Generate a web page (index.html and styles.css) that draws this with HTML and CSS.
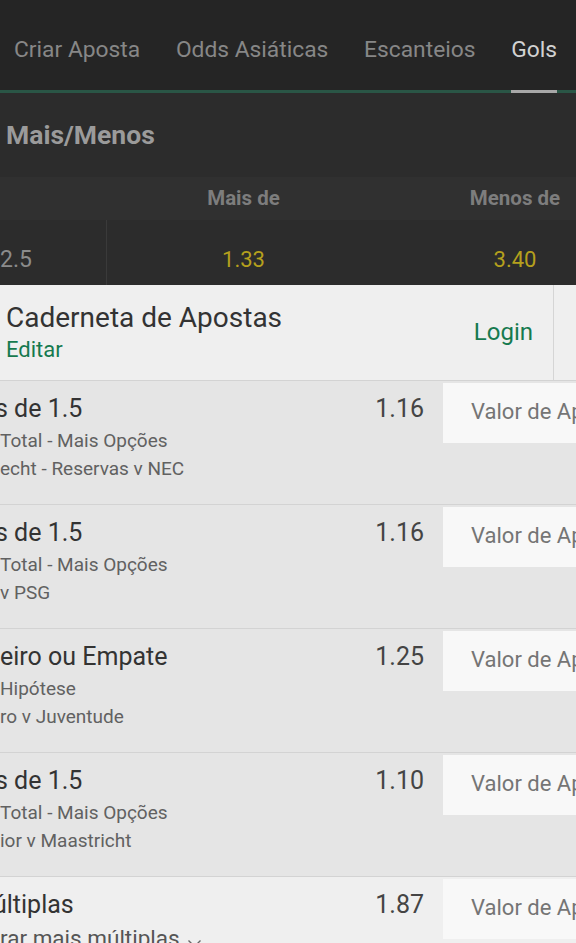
FILE: index.html
```html
<!DOCTYPE html>
<html lang="pt">
<head>
<meta charset="utf-8">
<title>Gols</title>
<link rel="stylesheet" href="styles.css">
</head>
<body>
<div class="page">
  <nav class="tabs">
    <span class="tab">Criar Aposta</span>
    <span class="tab">Odds Asiáticas</span>
    <span class="tab">Escanteios</span>
    <span class="tab active">Gols</span>
  </nav>

  <section class="market">
    <h2 class="market-title">Mais/Menos</h2>
    <div class="grid head">
      <div class="cell"></div>
      <div class="cell">Mais de</div>
      <div class="cell">Menos de</div>
    </div>
    <div class="grid data">
      <div class="cell label">2.5</div>
      <div class="cell odd">1.33</div>
      <div class="cell odd">3.40</div>
    </div>
  </section>

  <section class="slip">
    <header class="slip-head">
      <div class="slip-titles">
        <div class="slip-title">Caderneta de Apostas</div>
        <div class="slip-edit">Editar</div>
      </div>
      <div class="slip-login">Login</div>
      <div class="slip-side"></div>
    </header>

    <div class="bet">
      <div class="bet-info">
        <div class="bet-title cut">s de 1.5</div>
        <div class="bet-sub">Total - Mais Opções</div>
        <div class="bet-sub">echt - Reservas v NEC</div>
      </div>
      <div class="bet-odd">1.16</div>
      <div class="stake">Valor de Aposta</div>
    </div>

    <div class="bet">
      <div class="bet-info">
        <div class="bet-title cut">s de 1.5</div>
        <div class="bet-sub">Total - Mais Opções</div>
        <div class="bet-sub">v PSG</div>
      </div>
      <div class="bet-odd">1.16</div>
      <div class="stake">Valor de Aposta</div>
    </div>

    <div class="bet">
      <div class="bet-info">
        <div class="bet-title">eiro ou Empate</div>
        <div class="bet-sub">Hipótese</div>
        <div class="bet-sub">ro v Juventude</div>
      </div>
      <div class="bet-odd">1.25</div>
      <div class="stake">Valor de Aposta</div>
    </div>

    <div class="bet">
      <div class="bet-info">
        <div class="bet-title cut">s de 1.5</div>
        <div class="bet-sub">Total - Mais Opções</div>
        <div class="bet-sub">ior v Maastricht</div>
      </div>
      <div class="bet-odd">1.10</div>
      <div class="stake">Valor de Aposta</div>
    </div>

    <div class="bet multi">
      <div class="bet-info">
        <div class="bet-title cut-u">últiplas</div>
        <div class="bet-more">rar mais múltiplas<svg class="chev" viewBox="0 0 14 9" width="15" height="9"><path d="M1 1.5 L7 7.5 L13 1.5" fill="none" stroke="#666" stroke-width="1.4"/></svg></div>
      </div>
      <div class="bet-odd">1.87</div>
      <div class="stake">Valor de Aposta</div>
    </div>
  </section>
</div>
</body>
</html>
```

FILE: styles.css
```css
* { box-sizing: border-box; margin: 0; padding: 0; }
html, body { background: #e5e5e5; }
body {
  margin: 0;
  font-family: Roboto, "Noto Sans", "Liberation Sans", sans-serif;
  width: 576px;
  height: 943px;
  overflow: hidden;
}
.page { width: 576px; height: 943px; overflow: hidden; }

/* tabs */
.tabs {
  display: flex;
  height: 93px;
  background: #252525;
  box-shadow: inset 0 -3px 0 #2a5646;
  padding-left: 14px;
  white-space: nowrap;
}
.tab {
  font-size: 22.8px;
  color: #878787;
  line-height: 100px;
  height: 93px;
  margin-right: 35.7px;
  border-bottom: 3px solid transparent;
  flex: none;
}
.tab.active {
  color: #d2d2d2;
  border-bottom-color: #a8a8a8;
}

/* market */
.market { background: #2c2c2c; }
.market-title {
  font-size: 26.5px;
  font-weight: 700;
  color: #9b9b9b;
  height: 84px;
  line-height: 84px;
  padding-left: 6px;
}
.grid {
  display: grid;
  grid-template-columns: 107px 273px 270px;
  width: 650px;
}
.head {
  background: #303030;
  grid-auto-rows: 43px;
  font-size: 20.5px;
  font-weight: 700;
  color: #7d7d7d;
  line-height: 42px;
}
.head .cell { text-align: center; }
.data {
  grid-auto-rows: 65px;
  font-size: 22px;
}
.data .cell { text-align: center; line-height: 80px; }
.data .label {
  text-align: left;
  color: #8b8b8b;
  font-size: 23px;
  border-right: 1px solid #3a3a3a;
}
.data .odd { color: #b5a01d; }

/* slip */
.slip { background: #e5e5e5; }
.slip-head {
  display: flex;
  height: 96px;
  background: #efefef;
  border-bottom: 1px solid #d3d3d3;
}
.slip-titles { flex: 1; padding: 15px 0 0 6px; }
.slip-title { font-size: 28px; color: #333; line-height: 35px; }
.slip-edit { font-size: 22px; color: #167a4f; line-height: 29px; }
.slip-login {
  font-size: 24px;
  color: #167a4f;
  align-self: center;
  margin-right: 20px;
  padding-bottom: 2px;
}
.slip-side {
  width: 23px;
  border-left: 1px solid #d5d5d5;
}

.bet {
  display: flex;
  height: 124px;
  border-bottom: 1px solid #d3d3d3;
  background: #e5e5e5;
}
.bet-info {
  flex: 1;
  padding-top: 13px;
  white-space: nowrap;
  overflow: hidden;
}
.bet-title { font-size: 25px; color: #333; line-height: 30px; }
.bet-title.cut { margin-left: -5px; }
.bet-title.cut-u { margin-left: -7px; }
.bet-sub { font-size: 19px; color: #616161; line-height: 28px; }
.bet-info .bet-title + .bet-sub { margin-top: 3px; }
.bet-odd {
  font-size: 25px;
  color: #444;
  line-height: 30px;
  padding-top: 13px;
  margin-right: 19px;
}
.stake {
  width: 133px;
  height: 60px;
  margin-top: 2px;
  background: #f8f8f8;
  font-size: 22px;
  color: #757575;
  line-height: 58px;
  padding-left: 28px;
  white-space: nowrap;
  overflow: hidden;
}
.multi { background: #efefef; }
.bet-more {
  font-size: 22.5px;
  color: #555;
  line-height: 30px;
  margin-top: 3px;
}
.chev { margin-left: 7px; vertical-align: -2px; }
```
